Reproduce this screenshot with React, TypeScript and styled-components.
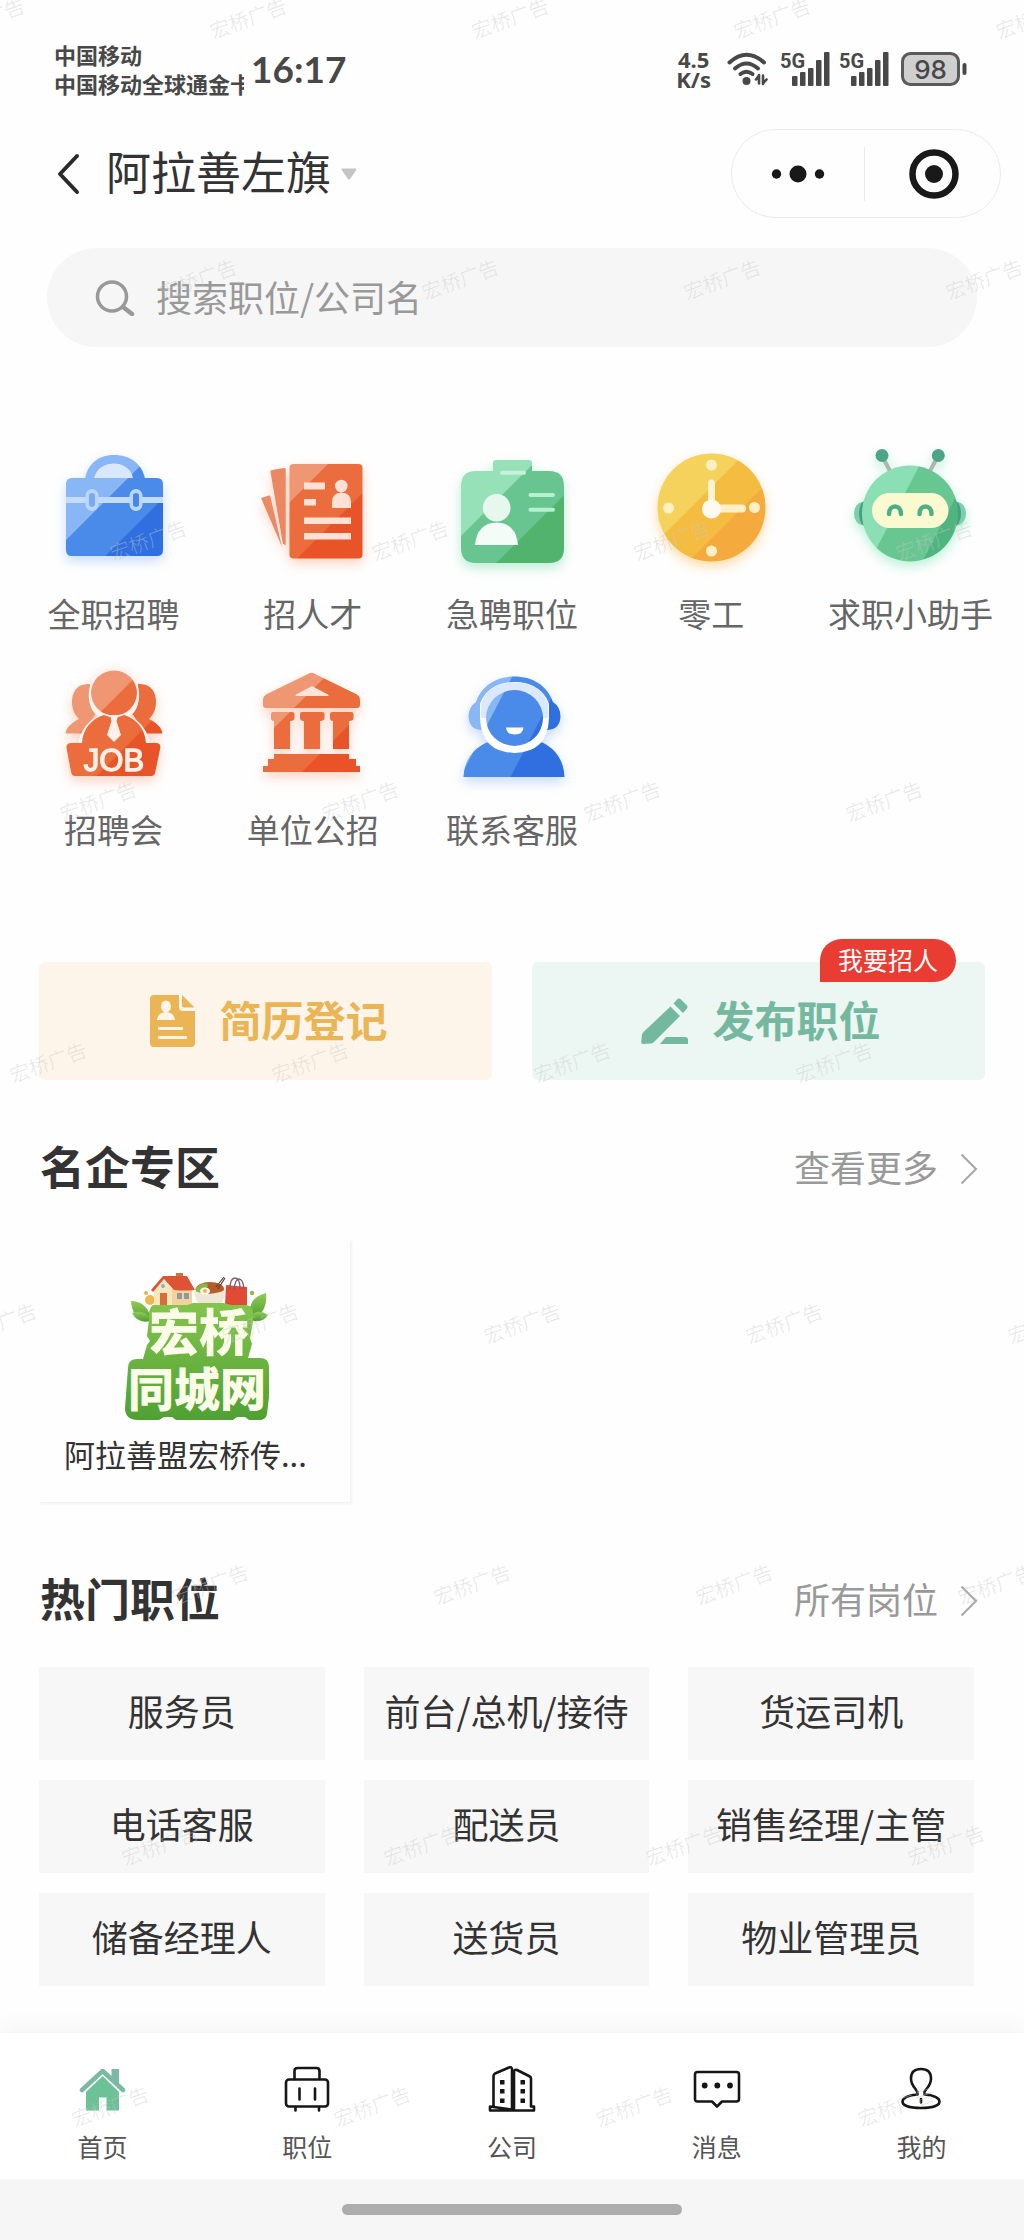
import React from 'react';
import styled, { createGlobalStyle } from 'styled-components';

const GlobalStyle = createGlobalStyle`
  *, *::before, *::after { box-sizing: border-box; }
  body {
    margin: 0;
    background: #fefefe;
    color: #333;
    font-family: "Noto Sans CJK SC", "Noto Sans", sans-serif;
  }
  button, input { font: inherit; color: inherit; border: 0; background: none; padding: 0; margin: 0; }
  button { cursor: pointer; }
  a { color: inherit; text-decoration: none; }
  h2 { margin: 0; }
  svg { display: block; flex: none; }
`;

const Page = styled.div`
  position: relative;
  display: flex;
  flex-direction: column;
  min-height: 100vh;
  overflow: hidden;
  background: #fefefe;
`;

/* ---------- status bar ---------- */

const StatusBar = styled.div`
  display: flex;
  align-items: center;
  justify-content: space-between;
  height: 62px;
  margin-top: 38px;
  padding: 0 57px 0 54px;
  color: #484848;
`;

const StatusSide = styled.div<{ $gap: number }>`
  display: flex;
  align-items: center;
  gap: ${(p) => p.$gap}px;
`;

const Carrier = styled.div`
  width: 190px;
  overflow-x: clip;
  white-space: nowrap;
  font-size: 22px;
  font-weight: 700;
  line-height: 29px;
`;

const Clock = styled.time`
  font-family: Lato, "Noto Sans", sans-serif;
  font-size: 37px;
  font-weight: 700;
  line-height: 44px;
`;

const Speed = styled.div`
  margin-right: 4px;
  font-family: "Noto Sans", sans-serif;
  font-size: 22px;
  font-weight: 700;
  line-height: 20px;
  text-align: center;
`;

const Signals = styled.div`
  display: flex;
  gap: 10px;
`;

/* ---------- header ---------- */

const Header = styled.header`
  display: flex;
  align-items: center;
  justify-content: space-between;
  margin-top: 29px;
  padding: 0 23px 0 56px;
`;

const HeaderLeft = styled.div`
  display: flex;
  align-items: center;
  gap: 26px;
`;

const PlainButton = styled.button`
  display: flex;
  align-items: center;
  justify-content: center;
  gap: 10px;
`;

const CityName = styled.span`
  padding-bottom: 5px;
  font-size: 45px;
  line-height: 60px;
`;

const Capsule = styled.div`
  display: flex;
  align-items: center;
  width: 270px;
  height: 89px;
  border: 1px solid #ececec;
  border-radius: 45px;
`;

const CapsuleButton = styled(PlainButton)`
  flex: 1;
  height: 54px;
  & + & { padding-left: 4px; border-left: 1px solid #ececec; }
`;

/* ---------- search ---------- */

const SearchBox = styled.label`
  display: flex;
  align-items: center;
  gap: 21px;
  height: 99px;
  margin: 30px 47px 0;
  padding: 0 48px;
  border-radius: 50px;
  background: #f6f6f6;
`;

const SearchInput = styled.input`
  flex: 1;
  min-width: 0;
  height: 58px;
  padding-bottom: 4px;
  font-size: 36px;
  outline: none;
  &::placeholder { color: #999; opacity: 1; }
`;

/* ---------- shortcuts ---------- */

const Shortcuts = styled.nav`
  display: grid;
  grid-template-columns: repeat(5, 1fr);
  row-gap: 26px;
  margin: 101px 14px 0;
`;

const Shortcut = styled.a<{ $glow: string }>`
  display: flex;
  flex-direction: column;
  align-items: center;
  gap: 20px;
  color: #666;
  font-size: 33px;
  line-height: 50px;
  white-space: nowrap;
  svg { overflow: visible; filter: drop-shadow(0 5px 6px ${(p) => p.$glow}); }
`;

/* ---------- two big actions ---------- */

const Actions = styled.div`
  display: grid;
  grid-template-columns: 1fr 1fr;
  gap: 40px;
  margin: 108px 39px 0;
`;

const Action = styled.button<{ $bg: string; $fg: string }>`
  position: relative;
  display: flex;
  align-items: center;
  justify-content: center;
  gap: 22px;
  height: 118px;
  padding-left: 4px;
  border-radius: 6px;
  background: ${(p) => p.$bg};
  color: ${(p) => p.$fg};
  font-size: 42px;
  font-weight: 700;
  line-height: 60px;
`;

const ActionText = styled.span`
  padding-bottom: 4px;
`;

const ActionBadge = styled.span`
  position: absolute;
  top: -23px;
  right: 29px;
  padding: 0 18px 2px;
  border-radius: 22px 22px 22px 0;
  background: #e93c33;
  color: #fff;
  font-size: 25px;
  font-weight: 400;
  line-height: 41px;
`;

/* ---------- sections ---------- */

const SectionHead = styled.div<{ $top: number }>`
  display: flex;
  align-items: center;
  justify-content: space-between;
  margin: ${(p) => p.$top}px 46px 0 40px;
`;

const SectionTitle = styled.h2`
  font-size: 45px;
  font-weight: 700;
  line-height: 60px;
`;

const MoreLink = styled.a`
  display: flex;
  align-items: center;
  gap: 22px;
  color: #999;
  font-size: 36px;
  line-height: 60px;
  svg { margin-top: 6px; }
`;

const CompanyCard = styled.a`
  display: flex;
  flex-direction: column;
  align-items: center;
  gap: 6px;
  width: 312px;
  height: 263px;
  margin: 43px 0 0 38px;
  padding-top: 26px;
  background: #fefefe;
  box-shadow: 2px 2px 2px #f3f3f3;
`;

const CompanyName = styled.span`
  align-self: stretch;
  padding: 0 26px;
  white-space: nowrap;
  font-size: 31px;
  line-height: 46px;
`;

const JobGrid = styled.div`
  display: grid;
  grid-template-columns: repeat(3, 1fr);
  gap: 20px 39px;
  margin: 39px 50px 47px 39px;
`;

const JobTag = styled.a`
  display: flex;
  align-items: center;
  justify-content: center;
  height: 93px;
  padding-bottom: 8px;
  background: #f7f7f7;
  font-size: 36px;
  line-height: 50px;
  white-space: nowrap;
`;

/* ---------- bottom bar ---------- */

const TabBar = styled.nav`
  display: grid;
  grid-template-columns: repeat(5, 1fr);
  margin-top: auto;
  padding: 33px 0 14px;
  background: #fff;
  box-shadow: 0 -4px 22px rgba(0, 0, 0, 0.05);
`;

const Tab = styled.a`
  display: flex;
  flex-direction: column;
  align-items: center;
  gap: 13px;
  color: #555;
  font-size: 25px;
  line-height: 38px;
`;

const HomeArea = styled.div`
  display: flex;
  justify-content: center;
  height: 62px;
  padding-top: 25px;
  background: #f6f6f6;
`;

const HomeHandle = styled.div`
  width: 33.3%;
  height: 11px;
  border-radius: 6px;
  background: #adadad;
`;

/* ---------- watermark ---------- */

const WatermarkLayer = styled.div`
  position: absolute;
  inset: 0;
  overflow: hidden;
  pointer-events: none;
`;

const WatermarkRow = styled.div`
  display: flex;
  height: 261px;
`;

const Watermark = styled.span`
  flex: none;
  width: 262px;
  height: 36px;
  color: rgba(200, 200, 200, 0.45);
  font-size: 20px;
  font-weight: 300;
  line-height: 36px;
  text-align: center;
  transform: rotate(-20deg);
`;

function Watermarks() {
  return (
    <WatermarkLayer aria-hidden="true">
      {Array.from({ length: 9 }, (_, r) => (
        <WatermarkRow key={r} style={{ marginLeft: -145 - r * 50 }}>
          {Array.from({ length: 7 }, (_, c) => (
            <Watermark key={c}>宏桥广告</Watermark>
          ))}
        </WatermarkRow>
      ))}
    </WatermarkLayer>
  );
}

/* ---------- small glyphs ---------- */

const WifiIcon = () => (
  <svg width="42" height="34" viewBox="0 0 42 34" fill="none" stroke="#484848" strokeWidth="4" strokeLinecap="round">
    <path d="M2.500 10.500Q19.500 -5 37 10.500" />
    <path d="M8 16.500Q19.500 6.500 31 16.500" />
    <path d="M13.500 22Q19.500 17.500 25.500 22" />
    <circle cx="19.500" cy="29" r="4" fill="#484848" stroke="none" />
    <path d="M32 23v8.500M32 23.500l-3 4M36 32v-8.500M36 31.500l3.500-4" strokeWidth="2.600" />
  </svg>
);

const SignalIcon = () => (
  <svg width="49" height="34" viewBox="0 0 49 34" fill="#484848">
    <text x="-1" y="16" fontSize="20" fontWeight="700" fontFamily="Roboto, sans-serif">5G</text>
    <rect x="11" y="24" width="5.500" height="10" rx="1" />
    <rect x="19" y="20" width="5.500" height="14" rx="1" />
    <rect x="27" y="16" width="5.500" height="18" rx="1" />
    <rect x="35" y="8" width="5.500" height="26" rx="1" />
    <rect x="43" y="0" width="5.500" height="34" rx="1" />
  </svg>
);

const BatteryIcon = () => (
  <svg width="66" height="34" viewBox="0 0 66 34">
    <rect x="1.500" y="1.500" width="56" height="31" rx="8" fill="#cfcfcf" stroke="#5a5a5a" strokeWidth="3" />
    <rect x="61.500" y="11" width="4" height="12" rx="2" fill="#484848" />
    <text x="29.500" y="26.500" textAnchor="middle" fontSize="26" fontWeight="500" fill="#484848" fontFamily="Inter, sans-serif">98</text>
  </svg>
);

const BackIcon = () => (
  <svg width="24" height="42" viewBox="0 0 24 42" fill="none" stroke="#2a2a2a" strokeWidth="4" strokeLinecap="round" strokeLinejoin="round">
    <path d="M21 3L4 21l17 18" />
  </svg>
);

const CaretIcon = () => (
  <svg width="16" height="12" viewBox="0 0 16 12" fill="#c4c4c4">
    <path d="M1 0.500h14q1 .5 .2 1.500L9 11q-1 1-2 0L.8 2Q0 1 1 .5z" />
  </svg>
);

const DotsIcon = () => (
  <svg width="54" height="18" viewBox="0 0 54 18" fill="#191919">
    <circle cx="5.500" cy="9" r="4.700" />
    <circle cx="27" cy="9" r="8.500" />
    <circle cx="48.500" cy="9" r="4.700" />
  </svg>
);

const TargetIcon = () => (
  <svg width="50" height="50" viewBox="0 0 50 50">
    <circle cx="25" cy="25" r="21.500" fill="none" stroke="#191919" strokeWidth="6.500" />
    <circle cx="25" cy="25" r="9" fill="#191919" />
  </svg>
);

const SearchIcon = () => (
  <svg width="40" height="36" viewBox="0 0 40 36" fill="none" stroke="#999" strokeWidth="3.500" strokeLinecap="round">
    <circle cx="17" cy="16.500" r="14.500" />
    <path d="M28 27l9 7" strokeWidth="4.500" />
  </svg>
);

const ChevronIcon = () => (
  <svg width="18" height="32" viewBox="0 0 18 32" fill="none" stroke="#a6a6a6" strokeWidth="2">
    <path d="M1.500 1.500L16 16 1.500 30.500" />
  </svg>
);

/* ---------- shortcut drawings ---------- */

type BandProps = { id: string; colors: [string, string, string]; at: [number, number]; x2?: number; y2?: number };

/* three flat tones that meet on diagonal edges */
const Bands = ({ id, colors, at, x2 = 120, y2 = 120 }: BandProps) => (
  <defs>
    <linearGradient id={id} gradientUnits="userSpaceOnUse" x1="0" y1="0" x2={x2} y2={y2}>
      <stop offset={at[0]} stopColor={colors[0]} />
      <stop offset={at[0] + 0.008} stopColor={colors[1]} />
      <stop offset={at[1]} stopColor={colors[1]} />
      <stop offset={at[1] + 0.008} stopColor={colors[2]} />
    </linearGradient>
  </defs>
);

const BLUE: [string, string, string] = ['#89b7f5', '#4a8ae9', '#306fe0'];
const ORANGE: [string, string, string] = ['#ef9673', '#eb6c3d', '#e85427'];
const GREEN: [string, string, string] = ['#97e1b9', '#69c590', '#52b36f'];

const Box = ({ children }: { children: React.ReactNode }) => (
  <svg width="120" height="120" viewBox="0 0 120 120">{children}</svg>
);

const BriefcaseArt = () => (
  <Box>
    <Bands id="case" colors={BLUE} at={[0.43, 0.66]} />
    <path d="M31 31C34 14 46 7 60.500 7S88 15 91 31z" fill="url(#case)" />
    <path d="M40 30C43 19 52 15.500 60 15.500S77 20 79 30z" fill="#d9e8fe" />
    <path d="M18 30h85q6 0 6 6v13H12V36q0-6 6-6z" fill="url(#case)" />
    <path d="M12 55h97v47q0 6-6 6H18q-6 0-6-6z" fill="url(#case)" />
    <path d="M12 49h97v6H12z" fill="#c3dcfe" />
    <rect x="31.500" y="41" width="13" height="22" rx="6.500" fill="#b9d6fd" />
    <rect x="75.500" y="41" width="13" height="22" rx="6.500" fill="#b9d6fd" />
    <rect x="35" y="45" width="6" height="14" rx="3" fill="#7da9ee" />
    <rect x="79" y="45" width="6" height="14" rx="3" fill="#4a86e8" />
  </Box>
);

const ResumeArt = () => (
  <Box>
    <Bands id="cv" colors={ORANGE} at={[0.375, 0.64]} />
    <path d="M8 50l8-2.500q1 0 1.400 1.200L29 99z" fill="#ec8a66" />
    <path d="M19 22l12-2q1.700-.2 1.700 1.500V97L30 96 17.500 24q-.3-1.700 1.500-2z" fill="#ec8763" />
    <rect x="36.500" y="16" width="73" height="94.500" rx="4" fill="url(#cv)" />
    <g fill="#ffe2d5">
      <rect x="51" y="34.500" width="21" height="7" />
      <rect x="51" y="51" width="12" height="6.500" />
      <rect x="51" y="69.500" width="47" height="6.500" />
      <rect x="51" y="85" width="47" height="6.500" />
      <circle cx="88.300" cy="38" r="6.300" />
      <path d="M79 60V54q0-9 9.300-9.500Q98 45 98 54v6z" />
    </g>
  </Box>
);

const BadgeArt = () => (
  <Box>
    <Bands id="badge" colors={GREEN} at={[0.4, 0.66]} />
    <path d="M44 12h33q3 0 3 3v8h17q15 0 15 15v62q0 15-15 15H24q-15 0-15-15V38q0-15 15-15h17v-8q0-3 3-3z" fill="url(#badge)" />
    <path d="M50 24.700h22" stroke="#c4f2da" strokeWidth="4" strokeLinecap="round" />
    <path d="M78.500 47h22.500M78.500 61.700h22.500" stroke="#b5f0cf" strokeWidth="4" strokeLinecap="round" />
    <circle cx="44.700" cy="59.700" r="13.800" fill="#e6f8ee" />
    <path d="M23 97q2-22 21.700-22.500Q64 75 66 97z" fill="#f3fcf7" />
  </Box>
);

const ClockArt = () => (
  <Box>
    <Bands id="clock" colors={['#f5d25b', '#f4bd42', '#f4aa3d']} at={[0.41, 0.625]} />
    <circle cx="60.500" cy="59.500" r="54" fill="url(#clock)" />
    <g fill="#fff0c4">
      <circle cx="60.500" cy="17" r="5.500" />
      <circle cx="17.500" cy="60" r="5.500" />
      <circle cx="103.500" cy="59.500" r="5.500" />
      <circle cx="60.500" cy="103" r="5.500" />
    </g>
    <path d="M60.500 35v26" stroke="#fff3d0" strokeWidth="7" strokeLinecap="round" />
    <path d="M61 60.500h30" stroke="#fff0c8" strokeWidth="8" strokeLinecap="round" />
    <circle cx="60.500" cy="61" r="9.500" fill="#fffaf0" />
  </Box>
);

const RobotArt = () => (
  <Box>
    <Bands id="robot" colors={['#8adfb4', '#68c691', '#50b481']} at={[0.495, 0.83]} x2={124} y2={64} />
    <path d="M32 8l8 15M88 8l-8 15" stroke="#aeb5b2" strokeWidth="4" />
    <circle cx="32" cy="7.500" r="6.500" fill="#4ca586" />
    <circle cx="88.300" cy="7.500" r="6.500" fill="#4ca586" />
    <ellipse cx="13" cy="65.500" rx="9" ry="11.500" fill="#7bceb0" />
    <ellipse cx="107" cy="65.500" rx="9" ry="11.500" fill="#7bceb0" />
    <ellipse cx="15" cy="65.500" rx="6" ry="12.500" fill="#46a27c" />
    <ellipse cx="105" cy="65.500" rx="6" ry="12.500" fill="#46a27c" />
    <circle cx="60" cy="65.500" r="48" fill="url(#robot)" />
    <rect x="22" y="45" width="76.500" height="35" rx="17.500" fill="#fbf9d0" />
    <path d="M39 66c0-10 12-10 12 0M69.500 66c0-10 12-10 12 0" fill="none" stroke="#4fae88" strokeWidth="4.500" strokeLinecap="round" />
  </Box>
);

const JobFairArt = () => (
  <Box>
    <Bands id="fair" colors={ORANGE} at={[0.39, 0.64]} />
    <path d="M36 20c-13-1-18 8-18 18 0 8 3 13 7 17-8 4-13 9-13.500 14.500H28l14-20z" fill="url(#fair)" />
    <path d="M84 20c13-1 18 8 18 18 0 8-3 13-7 17 8 4 13 9 13.500 14.500H92l-14-20z" fill="url(#fair)" />
    <path d="M24 80c2-13 9-22 20-28C29 43 31 3 60 3s31 40 16 49c11 6 18 15 20 28z" fill="#fff4ef" />
    <ellipse cx="60" cy="29" rx="23" ry="22.500" fill="url(#fair)" />
    <path d="M28 79c1-14 9-24 22-28 7 3 13 3 20 0 13 4 21 14 22 28z" fill="url(#fair)" />
    <path d="M56 51h8.500l-2 6 4.500 14-7 7-7-7 4.500-14z" fill="#fff0ea" />
    <path d="M17 79h85q5 0 4.300 5L101 109q-.7 3-4 3H21q-3 0-3.700-3L12.500 84q-.7-5 4.500-5z" fill="url(#fair)" />
    <text x="60" y="106.500" textAnchor="middle" fontSize="31" fontWeight="400" fill="#fff1ea" stroke="#fff1ea" strokeWidth="1.400" fontFamily="Liberation Sans, sans-serif">JOB</text>
  </Box>
);

const BankArt = () => (
  <Box>
    <Bands id="bank" colors={ORANGE} at={[0.35, 0.65]} />
    <g fill="url(#bank)">
      <path d="M55 10q3.500-2.500 7 0l41 20q4 2 4 6v5q0 3-3 3H13q-3 0-3-3v-5q0-4 4-6z" />
      <path d="M18 50q0-2 2-2h19q2.500 0 2.500 2v4q0 3-4.500 3v28H21V57q-3 0-3-3z" />
      <path d="M47 50q0-2 2-2h20q2.500 0 2.500 2v4q0 3-4.500 3v28H51V57q-4 0-4-3z" />
      <path d="M77 50q0-2 2-2h19q2.500 0 2.500 2v4q0 3-4.500 3v28H80V57q-3 0-3-3z" />
      <path d="M21 90h75v5h7v7h4v6H10v-6h5v-7h6z" />
    </g>
    <path d="M59 22l16 8.500q1.500 1.500-1 1.500H44q-2.500 0-1-1.500z" fill="#ffe4da" />
  </Box>
);

const ServiceArt = () => (
  <Box>
    <Bands id="service" colors={BLUE} at={[0.42, 0.74]} x2={124} y2={64} />
    <path d="M11.500 113q1-24 23-34.500h56q21 10.500 22 34.500z" fill="url(#service)" />
    <path d="M29 66q-12-1-12.500-13.500Q16.500 43 24 38C30 21 45 12.500 62.500 12.500S95 21 101 38q7.500 5 7.500 14.500Q108 65 96 66z" fill="url(#service)" />
    <path d="M28 40C33 25 47 18 62.500 18S92 25 97 40v14q-1 34-34.500 35Q29 88 28 54z" fill="#fff" />
    <path d="M29 54V40C34 25 47 18.500 62.500 18.500S91 25 96 40v14z" fill="#dbe8fd" />
    <ellipse cx="62.500" cy="54" rx="28.500" ry="28" fill="url(#service)" />
    <path d="M54 63.500h17.500q0 6.500-8.700 7-8.800-.5-8.800-7z" fill="#fff" />
  </Box>
);

/* ---------- action glyphs ---------- */

const ResumeGlyph = () => (
  <svg width="50" height="54" viewBox="-2 0 50 54">
    <path d="M5 1h25v12q0 4 4 4h12v32q0 4-4 4H5q-4 0-4-4V5q0-4 4-4z" fill="#ebb454" />
    <path d="M33 1l12.500 12.500H35q-2 0-2-2z" fill="#ebb454" />
    <g fill="#fdf5e9">
      <ellipse cx="17" cy="12.500" rx="5" ry="6" />
      <path d="M8 26q1-8 9-8t9 8z" />
      <rect x="9" y="33" width="25" height="3" rx="1" />
      <rect x="9" y="42" width="29" height="3" rx="1" />
    </g>
  </svg>
);

const PenGlyph = () => (
  <svg width="50" height="50" viewBox="0 0 50 50" fill="#74b99f">
    <path d="M37 3.500q2-2 4 0l5.500 5.500q2 2 0 4L43 17l-9.500-9.500z" />
    <path d="M30.500 10.500l9.500 9.500L14 46q-1.500 1.500-3.500 1.500L3 48q-2 0-1.800-2l.8-7.500Q2.300 37 3.500 36z" />
    <path d="M26 41h19q3 0 3 3v4H20z" />
  </svg>
);

/* ---------- company logo ---------- */

const CompanyLogo = () => (
  <svg width="160" height="160" viewBox="0 0 160 160">
    <defs>
      <linearGradient id="leaf" x1="0" y1="0" x2="0" y2="1">
        <stop offset="0" stopColor="#93cb55" />
        <stop offset="1" stopColor="#4b9b34" />
      </linearGradient>
      <linearGradient id="plate" gradientUnits="userSpaceOnUse" x1="0" y1="40" x2="0" y2="156">
        <stop offset="0" stopColor="#83c44c" />
        <stop offset="1" stopColor="#4fa034" />
      </linearGradient>
    </defs>
    <path d="M17 36q14 0 19 14l-2 6q-16-2-17-20z" fill="url(#leaf)" />
    <path d="M18 48q10-4 18 4v4q-12 3-18-8z" fill="url(#leaf)" />
    <path d="M152 28q2 20-14 26l-2-8q0-14 16-18z" fill="url(#leaf)" />
    <path d="M154 50q-6 9-18 5l2-6q8-5 16 1z" fill="url(#leaf)" />
    <circle cx="36" cy="35" r="5" fill="#efb84e" />
    <circle cx="32" cy="28" r="2" fill="#e7b04c" />
    <circle cx="138" cy="28" r="2.200" fill="#8fb94e" />
    <path d="M62 8h7v10h-7z" fill="#c9743f" />
    <path d="M40 22l10-8 10 12v14H40z" fill="#fae6bd" />
    <path d="M58 24h20v16H58z" fill="#f3d39c" />
    <path d="M37 25l12-14h24l8 14q-10 1-21 0l-10-11-11 13z" fill="#dc5435" />
    <path d="M46 28h7v12h-7z" fill="#d96c3b" />
    <path d="M63 28h5v6h-5zM70 28h5v6h-5z" fill="#8d9aa3" />
    <circle cx="49" cy="21" r="2" fill="#78bcc9" />
    <ellipse cx="96" cy="24" rx="14" ry="7" fill="#b65b2a" />
    <path d="M81 24q6-7 13-5l-2 9h-9z" fill="#88b746" />
    <path d="M80 26q16 6 31-1 0 14-9 17H89q-8-4-9-16z" fill="#f0e6d6" />
    <ellipse cx="91" cy="26" rx="5" ry="3.500" fill="#fff" />
    <circle cx="91" cy="26" r="2" fill="#f2b435" />
    <path d="M102 22l8-10M104 24l7-11" stroke="#5e3a2b" strokeWidth="1.200" />
    <path d="M112 20l21 2v18h-22z" fill="#e24a35" />
    <path d="M116 24q0-11 5-11t5 11M120 25q1-11 5-11t5 10" fill="none" stroke="#7a5d6c" strokeWidth="1.300" />
    <path d="M39 40h34l6-2h30l8 2h14q8 0 8 7v10l-3 16 2 6-4 14h12q9 0 9 9v30l-2 17q-1 6-8 6h-10l-4-3h-8l-4 3H62l-4-3h-8l-5 3H24q-13 0-13-12l3-40q0-9 9-9h6l4-14 3-4-3-5 2-16q-1-12 4-15z" fill="url(#plate)" />
    <g fontWeight="900" fill="#fcfde9" fontFamily="Noto Sans CJK SC, sans-serif">
      <text x="85" y="86" textAnchor="middle" fontSize="50">宏桥</text>
      <text x="83" y="141" textAnchor="middle" fontSize="46">同城网</text>
    </g>
  </svg>
);

/* ---------- tab icons ---------- */

const TabBox = ({ children }: { children: React.ReactNode }) => (
  <svg width="48" height="48" viewBox="0 0 48 48" fill="none" stroke="#161616" strokeWidth="2.600" strokeLinecap="round" strokeLinejoin="round">
    {children}
  </svg>
);

const TabHome = () => (
  <TabBox>
    <g stroke="none">
      <path d="M33.500 3h7.500v15l-7.500-7z" fill="#7bb9a2" />
      <path d="M8 26L24.700 10 41 26v18.500H28.500V31.500H21v13H8z" fill="#6dc197" />
    </g>
    <path d="M4 24L24.700 5 45 24" stroke="#7bb9a2" strokeWidth="4.500" />
  </TabBox>
);

const TabJobs = () => (
  <TabBox>
    <rect x="3" y="13.500" width="42" height="27" rx="3" />
    <path d="M11.500 13V5q0-3 3-3h19q3 0 3 3v8M16.500 22.500v11M32 22.500v11M12.500 41v3.500M36 41v3.500" />
  </TabBox>
);

const TabCompany = () => (
  <TabBox>
    <path d="M5.500 40.500V10q0-1.500 1.500-2.500L21 1.500q3-1 3 2V44M26 44V6q0-3 3-2l12 6q2 1 2 2.500v28h3V44.500H2v-4z" />
    <path d="M12 14h4.500v4.500H12zM12 23h4.500v4.500H12zM12 32.500h4.500V37H12zM32.500 14H37v4.500h-4.500zM32.500 23H37v4.500h-4.500zM32.500 32.500H37V37h-4.500z" fill="#161616" stroke="none" />
  </TabBox>
);

const TabMessage = () => (
  <TabBox>
    <path d="M4.500 6h39q2.500 0 2.500 2.500V33q0 2.500-2.500 2.500H29l-5 5-5-5H4.500Q2 35.500 2 33V8.500Q2 6 4.500 6z" />
    <g fill="#161616" stroke="none">
      <circle cx="11.700" cy="19.500" r="2.900" />
      <circle cx="24.300" cy="19.500" r="2.900" />
      <circle cx="37" cy="19.500" r="2.900" />
    </g>
  </TabBox>
);

const TabMe = () => (
  <TabBox>
    <path d="M19.500 28.500q.5-2.500-2-5.500C14 19 13 16 13 12.500 13 6 16.500 3 23 3s10 3 10 9.500c0 3.500-1 6.500-4.500 10.500-2.500 3-2.500 3-2 5.500 9 .5 15 3.500 15 7 0 4-7 6.500-18.500 6.500S4.500 39.500 4.500 35.500c0-3.500 6-6.500 15-7zM23 33v3.500" />
  </TabBox>
);

/* ---------- data ---------- */

const SHORTCUTS = [
  { label: '全职招聘', Art: BriefcaseArt, glow: 'rgba(74,138,233,0.3)' },
  { label: '招人才', Art: ResumeArt, glow: 'rgba(240,130,80,0.35)' },
  { label: '急聘职位', Art: BadgeArt, glow: 'rgba(90,210,150,0.4)' },
  { label: '零工', Art: ClockArt, glow: 'rgba(250,180,60,0.45)' },
  { label: '求职小助手', Art: RobotArt, glow: 'rgba(90,220,160,0.4)' },
  { label: '招聘会', Art: JobFairArt, glow: 'rgba(240,130,80,0.35)' },
  { label: '单位公招', Art: BankArt, glow: 'rgba(240,130,80,0.35)' },
  { label: '联系客服', Art: ServiceArt, glow: 'rgba(74,138,233,0.3)' },
];

const JOBS = ['服务员', '前台/总机/接待', '货运司机', '电话客服', '配送员', '销售经理/主管', '储备经理人', '送货员', '物业管理员'];

const TABS = [
  { label: '首页', Icon: TabHome },
  { label: '职位', Icon: TabJobs },
  { label: '公司', Icon: TabCompany },
  { label: '消息', Icon: TabMessage },
  { label: '我的', Icon: TabMe },
];

export default function App() {
  return (
    <>
      <GlobalStyle />
      <Page>
        <StatusBar>
          <StatusSide $gap={7}>
            <Carrier>
              中国移动
              <br />
              中国移动全球通金卡
            </Carrier>
            <Clock>16:17</Clock>
          </StatusSide>
          <StatusSide $gap={12}>
            <Speed>
              4.5
              <br />
              K/s
            </Speed>
            <WifiIcon />
            <Signals>
              <SignalIcon />
              <SignalIcon />
            </Signals>
            <BatteryIcon />
          </StatusSide>
        </StatusBar>

        <Header>
          <HeaderLeft>
            <PlainButton aria-label="返回">
              <BackIcon />
            </PlainButton>
            <PlainButton>
              <CityName>阿拉善左旗</CityName>
              <CaretIcon />
            </PlainButton>
          </HeaderLeft>
          <Capsule>
            <CapsuleButton aria-label="更多">
              <DotsIcon />
            </CapsuleButton>
            <CapsuleButton aria-label="关闭">
              <TargetIcon />
            </CapsuleButton>
          </Capsule>
        </Header>

        <SearchBox>
          <SearchIcon />
          <SearchInput type="text" aria-label="搜索" placeholder="搜索职位/公司名" />
        </SearchBox>

        <Shortcuts>
          {SHORTCUTS.map(({ label, Art, glow }) => (
            <Shortcut key={label} href="#" $glow={glow}>
              <Art />
              {label}
            </Shortcut>
          ))}
        </Shortcuts>

        <Actions>
          <Action $bg="#fdf5e9" $fg="#ebb454">
            <ResumeGlyph />
            <ActionText>简历登记</ActionText>
          </Action>
          <Action $bg="#ecf6f3" $fg="#74b99f">
            <PenGlyph />
            <ActionText>发布职位</ActionText>
            <ActionBadge>我要招人</ActionBadge>
          </Action>
        </Actions>

        <SectionHead $top={56}>
          <SectionTitle>名企专区</SectionTitle>
          <MoreLink href="#">
            查看更多
            <ChevronIcon />
          </MoreLink>
        </SectionHead>
        <CompanyCard href="#">
          <CompanyLogo />
          <CompanyName>阿拉善盟宏桥传...</CompanyName>
        </CompanyCard>

        <SectionHead $top={66}>
          <SectionTitle>热门职位</SectionTitle>
          <MoreLink href="#">
            所有岗位
            <ChevronIcon />
          </MoreLink>
        </SectionHead>
        <JobGrid>
          {JOBS.map((job) => (
            <JobTag key={job} href="#">
              {job}
            </JobTag>
          ))}
        </JobGrid>

        <TabBar>
          {TABS.map(({ label, Icon }) => (
            <Tab key={label} href="#">
              <Icon />
              {label}
            </Tab>
          ))}
        </TabBar>
        <HomeArea>
          <HomeHandle />
        </HomeArea>
        <Watermarks />
      </Page>
    </>
  );
}
